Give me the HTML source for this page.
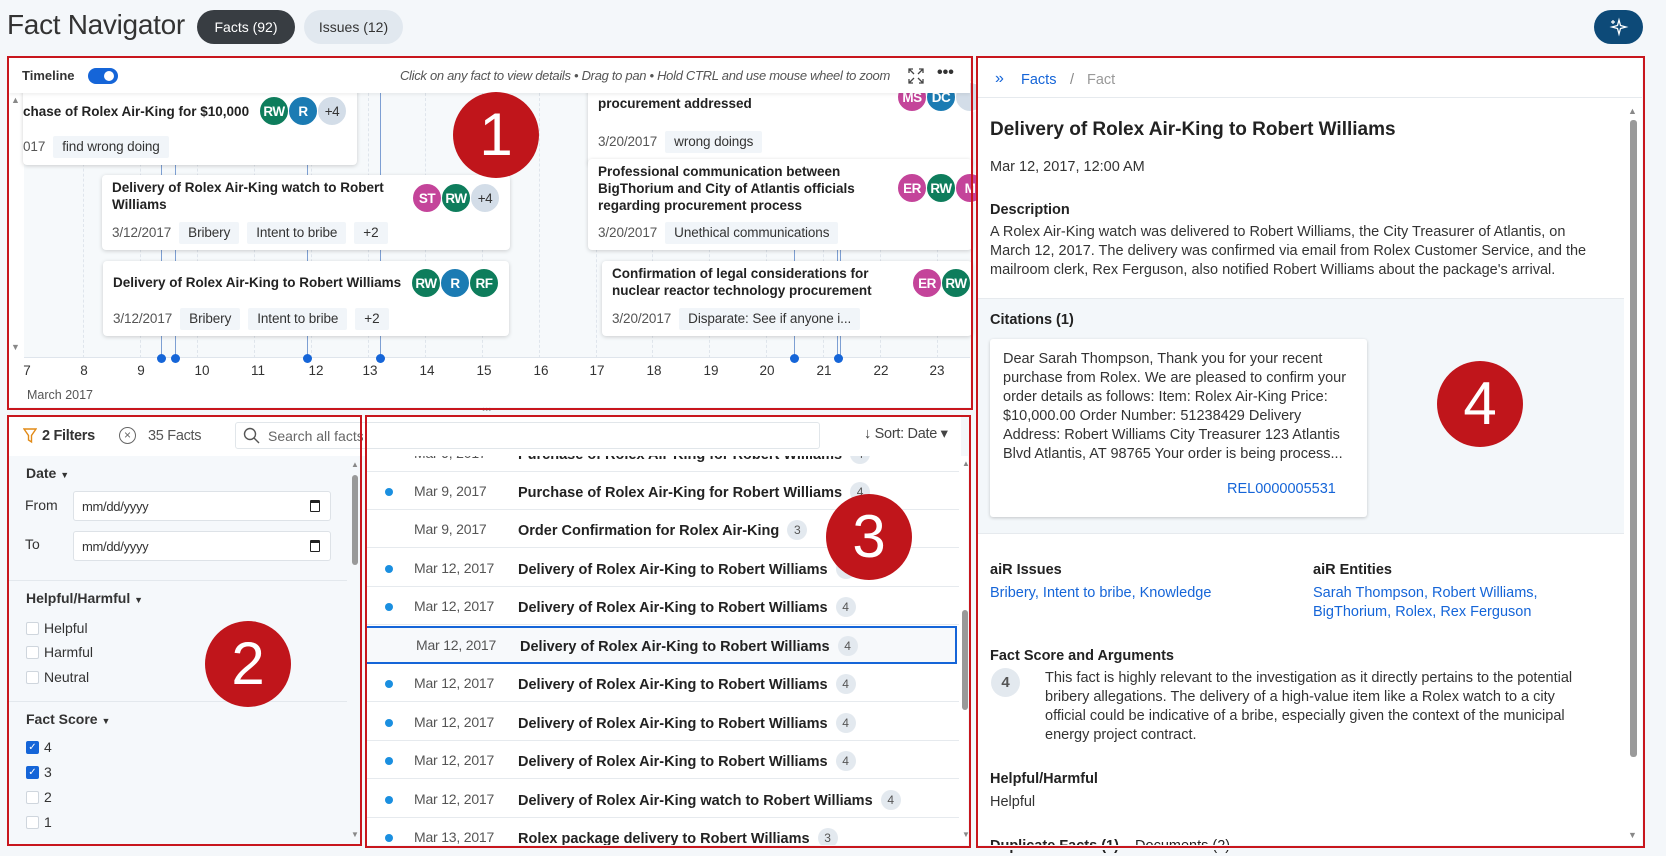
<!DOCTYPE html>
<html><head><meta charset="utf-8"><style>
*{box-sizing:border-box;margin:0;padding:0}
body{width:1666px;height:852px;background:#f4f7fa;font-family:"Liberation Sans",Arial,sans-serif;color:#222;position:relative;overflow:hidden}
.a{position:absolute}
.n{letter-spacing:-0.45px}
.red{position:absolute;border:2px solid #c8161d}
.num{position:absolute;width:86px;height:86px;border-radius:50%;background:#c0151b;color:#fff;font-size:60px;text-align:center;line-height:86px;font-family:"Liberation Sans",sans-serif}
.card{position:absolute;background:#fff;border-radius:4px;box-shadow:0 1px 4px rgba(0,0,0,.18)}
.ct{position:absolute;font-weight:bold;font-size:13.5px;line-height:17px;letter-spacing:0;color:#222}
.row{position:absolute;height:22px;line-height:22px;font-size:13.5px;letter-spacing:-0.1px;color:#444;white-space:nowrap}
.tag{display:inline-block;background:#f1f5f9;padding:0 9px;margin-right:8px;color:#333;border-radius:2px}
.dt{display:inline-block;margin-right:8px;color:#555}
.av{position:absolute;width:30px;height:30px;border-radius:50%;color:#fff;font-size:13.5px;font-weight:bold;text-align:center;line-height:30px;border:1.5px solid #fff;letter-spacing:-0.5px}
.g{background:#0e7d5c}.b{background:#1b7bb3}.p{background:#c4449a}.gr{background:#d3dde8;color:#333;font-weight:normal}
.vl{position:absolute;width:1px;background:#7d9fd3;top:93px;height:265px}
.dl{position:absolute;width:0;border-left:1px dashed #dfe5ec;top:93px;height:265px}
.dot{position:absolute;width:9px;height:9px;border-radius:50%;background:#1565d8;top:354px}
.tk{position:absolute;top:363px;font-size:13.5px;color:#333;width:20px;margin-left:-10px;text-align:center}
.lr{position:absolute;left:367px;width:592px;height:38px;border-bottom:1px solid #e6eaee;font-size:14px}
.lr .d{position:absolute;left:18px;top:16px;width:8px;height:8px;border-radius:50%;background:#1a8fe0}
.lr .dd{position:absolute;left:47px;top:11px;color:#555;letter-spacing:-0.2px}
.lr .t{position:absolute;left:151px;top:10px;font-weight:bold;font-size:14.5px;letter-spacing:0;white-space:nowrap}
.bd{display:inline-block;width:20px;height:20px;border-radius:50%;background:#e3e9ef;color:#555;font-weight:normal;font-size:12px;text-align:center;line-height:20px;margin-left:8px;vertical-align:1px}
.cb{position:absolute;left:26px;width:13px;height:13px;border:1px solid #cfd6dd;border-radius:2px;background:#fff}
.cbk{background:#1565d8;border-color:#1565d8;color:#fff;font-size:10px;line-height:11px;text-align:center}
.fl{position:absolute;left:44px;font-size:14px;color:#333}
.inp{position:absolute;left:73px;width:258px;height:30px;background:#fff;border:1px solid #dde2e7;border-radius:3px;font-size:13px;color:#333;padding:7px 8px;letter-spacing:-0.3px}
.inp i{position:absolute;right:10px;top:8px;width:10px;height:12px;border:1.5px solid #222;border-top-width:3px;border-radius:1px}
.r4{position:absolute;left:990px;font-size:14.5px;color:#333;line-height:19px}
.h4{font-weight:bold;color:#222}
.lk{color:#1565d8}
</style></head><body>

<!-- header -->
<div class="a" style="left:7px;top:9px;font-size:28px;color:#333;letter-spacing:-0.3px">Fact Navigator</div>
<div class="a" style="left:197px;top:10px;width:98px;height:34px;border-radius:17px;background:#383d42;color:#fff;font-size:14px;text-align:center;line-height:34px">Facts (92)</div>
<div class="a" style="left:304px;top:10px;width:99px;height:34px;border-radius:17px;background:#e1e8ef;color:#333;font-size:14px;text-align:center;line-height:34px">Issues (12)</div>
<div class="a" style="left:1594px;top:10px;width:49px;height:34px;border-radius:17px;background:#0d4a78">
<svg width="49" height="34" viewBox="0 0 49 34"><path d="M25 10 L26.5 15.5 L32 17 L26.5 18.5 L25 24 L23.5 18.5 L18 17 L23.5 15.5Z" fill="none" stroke="#fff" stroke-width="1.3"/><path d="M19 10v4M17 12h4" stroke="#fff" stroke-width="1.2"/></svg></div>

<!-- Panel 1 timeline -->
<div class="a" style="left:9px;top:58px;width:961px;height:349px;background:#fff"></div>
<div class="a" style="left:24px;top:93px;width:946px;height:265px;background:#f6f9fb;overflow:hidden">
</div>
<div class="dl" style="left:83px"></div><div class="dl" style="left:140px"></div><div class="dl" style="left:197px"></div><div class="dl" style="left:254px"></div><div class="dl" style="left:311px"></div><div class="dl" style="left:368px"></div><div class="dl" style="left:425px"></div><div class="dl" style="left:482px"></div><div class="dl" style="left:539px"></div><div class="dl" style="left:596px"></div><div class="dl" style="left:652px"></div><div class="dl" style="left:709px"></div><div class="dl" style="left:766px"></div><div class="dl" style="left:823px"></div><div class="dl" style="left:880px"></div><div class="dl" style="left:937px"></div>
<div class="vl" style="left:161px"></div><div class="vl" style="left:175px"></div><div class="vl" style="left:307px"></div><div class="vl" style="left:380px"></div><div class="vl" style="left:794px"></div><div class="vl" style="left:837px"></div><div class="vl" style="left:840px"></div>
<div class="a" style="left:24px;top:357px;width:946px;height:1px;background:#dfe5ec"></div>
<div class="dot" style="left:157px"></div><div class="dot" style="left:171px"></div><div class="dot" style="left:303px"></div><div class="dot" style="left:376px"></div><div class="dot" style="left:790px"></div><div class="dot" style="left:834px"></div>
<div class="tk" style="left:27px">7</div><div class="tk" style="left:84px">8</div><div class="tk" style="left:141px">9</div><div class="tk" style="left:202px">10</div><div class="tk" style="left:258px">11</div><div class="tk" style="left:316px">12</div><div class="tk" style="left:370px">13</div><div class="tk" style="left:427px">14</div><div class="tk" style="left:484px">15</div><div class="tk" style="left:541px">16</div><div class="tk" style="left:597px">17</div><div class="tk" style="left:654px">18</div><div class="tk" style="left:711px">19</div><div class="tk" style="left:767px">20</div><div class="tk" style="left:824px">21</div><div class="tk" style="left:881px">22</div><div class="tk" style="left:937px">23</div>
<div class="a" style="left:27px;top:388px;font-size:12.5px;color:#555">March 2017</div>
<div class="a" style="left:11px;top:95px;font-size:9px;color:#888">▲</div>
<div class="a" style="left:11px;top:342px;font-size:9px;color:#888">▼</div>

<!-- cards -->
<div class="card" style="left:23px;top:80px;width:334px;height:85px">
 <div class="ct" style="left:0;top:23px">chase of Rolex Air-King for $10,000</div>
 <div class="av g" style="left:236px;top:16px">RW</div><div class="av b" style="left:265px;top:16px">R</div><div class="av gr" style="left:294px;top:16px">+4</div>
 <div class="row" style="left:0;top:56px"><span class="dt">017</span><span class="tag">find wrong doing</span></div>
</div>
<div class="card" style="left:588px;top:80px;width:384px;height:85px">
 <div class="ct" style="left:10px;top:15px">procurement addressed</div>
 <div class="av p" style="left:309px;top:2px">MS</div><div class="av b" style="left:338px;top:2px">DC</div><div class="av gr" style="left:367px;top:2px"></div>
 <div class="row" style="left:10px;top:51px"><span class="dt">3/20/2017</span><span class="tag">wrong doings</span></div>
</div>
<div class="card" style="left:102px;top:175px;width:408px;height:75px">
 <div class="ct" style="left:10px;top:4px">Delivery of Rolex Air-King watch to Robert<br>Williams</div>
 <div class="av p" style="left:310px;top:8px">ST</div><div class="av g" style="left:339px;top:8px">RW</div><div class="av gr" style="left:368px;top:8px">+4</div>
 <div class="row" style="left:10px;top:47px"><span class="dt">3/12/2017</span><span class="tag">Bribery</span><span class="tag">Intent to bribe</span><span class="tag">+2</span></div>
</div>
<div class="card" style="left:588px;top:159px;width:384px;height:91px">
 <div class="ct" style="left:10px;top:4px">Professional communication between<br>BigThorium and City of Atlantis officials<br>regarding procurement process</div>
 <div class="av p" style="left:309px;top:14px">ER</div><div class="av g" style="left:338px;top:14px">RW</div><div class="av p" style="left:367px;top:14px">M</div>
 <div class="row" style="left:10px;top:63px"><span class="dt">3/20/2017</span><span class="tag">Unethical communications</span></div>
</div>
<div class="card" style="left:103px;top:261px;width:406px;height:75px">
 <div class="ct" style="left:10px;top:13px">Delivery of Rolex Air-King to Robert Williams</div>
 <div class="av g" style="left:308px;top:7px">RW</div><div class="av b" style="left:337px;top:7px">R</div><div class="av g" style="left:366px;top:7px">RF</div>
 <div class="row" style="left:10px;top:47px"><span class="dt">3/12/2017</span><span class="tag">Bribery</span><span class="tag">Intent to bribe</span><span class="tag">+2</span></div>
</div>
<div class="card" style="left:602px;top:261px;width:370px;height:75px">
 <div class="ct" style="left:10px;top:4px">Confirmation of legal considerations for<br>nuclear reactor technology procurement</div>
 <div class="av p" style="left:310px;top:7px">ER</div><div class="av g" style="left:339px;top:7px">RW</div>
 <div class="row" style="left:10px;top:47px"><span class="dt">3/20/2017</span><span class="tag">Disparate: See if anyone i...</span></div>
</div>

<!-- timeline header -->
<div class="a" style="left:9px;top:58px;width:961px;height:35px;background:#fff;box-shadow:0 2px 3px rgba(0,0,0,.06)"></div>
<div class="a" style="left:22px;top:68px;font-size:13px;font-weight:bold;color:#333">Timeline</div>
<div class="a" style="left:88px;top:68px;width:30px;height:16px;border-radius:8px;background:#1565d8"><div class="a" style="left:16px;top:3px;width:10px;height:10px;border-radius:50%;background:#fff"></div></div>
<div class="a n" style="left:380px;top:68px;width:510px;text-align:right;font-size:13px;font-style:italic;color:#555;letter-spacing:-0.3px">Click on any fact to view details • Drag to pan • Hold CTRL and use mouse wheel to zoom</div>
<svg class="a" style="left:907px;top:67px" width="18" height="18" viewBox="0 0 18 18" fill="none" stroke="#444" stroke-width="1.3"><path d="M2 6V2h4M2 2l5 5M16 6V2h-4M16 2l-5 5M2 12v4h4M2 16l5-5M16 12v4h-4M16 16l-5-5"/></svg>
<div class="a" style="left:937px;top:64px;font-size:16px;font-weight:bold;color:#333">•••</div>
<div class="a" style="left:482px;top:404px;font-size:9px;color:#333;font-weight:bold">•••</div>

<!-- Panel 2 filters -->
<div class="a" style="left:9px;top:417px;width:952px;height:39px;background:#fff"></div>
<svg class="a" style="left:23px;top:428px" width="14" height="16" viewBox="0 0 14 16"><path d="M1 1h12L8.5 7.5V14L5.5 12V7.5Z" fill="none" stroke="#e28a17" stroke-width="1.4"/></svg>
<div class="a" style="left:42px;top:428px;font-size:14.5px;font-weight:bold;color:#333;letter-spacing:-0.3px">2 Filters</div>
<div class="a" style="left:119px;top:427px;width:17px;height:17px;border:1.3px solid #666;border-radius:50%;font-size:12px;text-align:center;line-height:14px;color:#666">×</div>
<div class="a" style="left:148px;top:428px;font-size:14.5px;color:#555;letter-spacing:-0.3px">35 Facts</div>
<div class="a" style="left:235px;top:422px;width:585px;height:27px;border:1px solid #e1e6ea;border-radius:3px;background:#fff"></div>
<svg class="a" style="left:243px;top:427px" width="17" height="17" viewBox="0 0 17 17" fill="none" stroke="#555" stroke-width="1.4"><circle cx="7" cy="7" r="5.5"/><path d="M11 11l5 5"/></svg>
<div class="a" style="left:268px;top:428px;font-size:14px;color:#666;width:95px;overflow:hidden;white-space:nowrap">Search all facts</div>
<div class="a" style="left:864px;top:426px;font-size:14.5px;color:#444;letter-spacing:-0.3px">↓ Sort: Date ▾</div>

<div class="a" style="left:9px;top:456px;width:350px;height:389px;background:#f5f8fb"></div>
<div class="a" style="left:26px;top:465px;font-size:14px;font-weight:bold;color:#333">Date <span style="font-size:9px">▼</span></div>
<div class="fl" style="left:25px;top:497px">From</div>
<div class="inp" style="top:491px">mm/dd/yyyy<i></i></div>
<div class="fl" style="left:25px;top:536px">To</div>
<div class="inp" style="top:531px">mm/dd/yyyy<i></i></div>
<div class="a" style="left:9px;top:580px;width:338px;height:1px;background:#e3e8ed"></div>
<div class="a" style="left:26px;top:590px;font-size:14px;font-weight:bold;color:#333">Helpful/Harmful <span style="font-size:9px">▼</span></div>
<div class="cb" style="top:622px"></div><div class="fl" style="top:620px">Helpful</div>
<div class="cb" style="top:646px"></div><div class="fl" style="top:644px">Harmful</div>
<div class="cb" style="top:671px"></div><div class="fl" style="top:669px">Neutral</div>
<div class="a" style="left:9px;top:701px;width:338px;height:1px;background:#e3e8ed"></div>
<div class="a" style="left:26px;top:711px;font-size:14px;font-weight:bold;color:#333">Fact Score <span style="font-size:9px">▼</span></div>
<div class="cb cbk" style="top:741px">✓</div><div class="fl" style="top:739px">4</div>
<div class="cb cbk" style="top:766px">✓</div><div class="fl" style="top:764px">3</div>
<div class="cb" style="top:791px"></div><div class="fl" style="top:789px">2</div>
<div class="cb" style="top:816px"></div><div class="fl" style="top:814px">1</div>
<div class="a" style="left:351px;top:460px;font-size:8px;color:#888">▲</div>
<div class="a" style="left:351px;top:830px;font-size:8px;color:#888">▼</div>
<div class="a" style="left:352px;top:475px;width:6px;height:90px;border-radius:3px;background:#999"></div>

<!-- Panel 3 list -->
<div class="a" style="left:367px;top:456px;width:601px;height:389px;background:#fff;overflow:hidden">
</div>
<div class="a" style="left:367px;top:456px;width:601px;height:389px;overflow:hidden">
<div class="lr" style="left:0;top:-22px"><div class="dd">Mar 9, 2017</div><div class="t">Purchase of Rolex Air-King for Robert Williams<span class="bd">4</span></div></div>
<div class="lr" style="left:0;top:16px"><div class="d"></div><div class="dd">Mar 9, 2017</div><div class="t">Purchase of Rolex Air-King for Robert Williams<span class="bd">4</span></div></div>
<div class="lr" style="left:0;top:54px"><div class="dd">Mar 9, 2017</div><div class="t">Order Confirmation for Rolex Air-King<span class="bd">3</span></div></div>
<div class="lr" style="left:0;top:93px"><div class="d"></div><div class="dd">Mar 12, 2017</div><div class="t">Delivery of Rolex Air-King to Robert Williams<span class="bd">4</span></div></div>
<div class="lr" style="left:0;top:131px"><div class="d"></div><div class="dd">Mar 12, 2017</div><div class="t">Delivery of Rolex Air-King to Robert Williams<span class="bd">4</span></div></div>
<div class="lr" style="left:-2px;top:170px;border:2px solid #1565d8;background:#f7f9fb"><div class="dd" style="top:9px;left:49px">Mar 12, 2017</div><div class="t" style="top:8px;left:153px">Delivery of Rolex Air-King to Robert Williams<span class="bd">4</span></div></div>
<div class="lr" style="left:0;top:208px"><div class="d"></div><div class="dd">Mar 12, 2017</div><div class="t">Delivery of Rolex Air-King to Robert Williams<span class="bd">4</span></div></div>
<div class="lr" style="left:0;top:247px"><div class="d"></div><div class="dd">Mar 12, 2017</div><div class="t">Delivery of Rolex Air-King to Robert Williams<span class="bd">4</span></div></div>
<div class="lr" style="left:0;top:285px"><div class="d"></div><div class="dd">Mar 12, 2017</div><div class="t">Delivery of Rolex Air-King to Robert Williams<span class="bd">4</span></div></div>
<div class="lr" style="left:0;top:324px"><div class="d"></div><div class="dd">Mar 12, 2017</div><div class="t">Delivery of Rolex Air-King watch to Robert Williams<span class="bd">4</span></div></div>
<div class="lr" style="left:0;top:362px"><div class="d"></div><div class="dd">Mar 13, 2017</div><div class="t">Rolex package delivery to Robert Williams<span class="bd">3</span></div></div>
</div>
<div class="a" style="left:962px;top:459px;font-size:8px;color:#888">▲</div>
<div class="a" style="left:962px;top:830px;font-size:8px;color:#888">▼</div>
<div class="a" style="left:962px;top:610px;width:6px;height:100px;border-radius:3px;background:#999"></div>

<!-- Panel 4 detail -->
<div class="a" style="left:978px;top:58px;width:664px;height:787px;background:#fff"></div>
<div class="a" style="left:995px;top:70px;font-size:16px;color:#1565d8">»</div>
<div class="a" style="left:1021px;top:72px;font-size:14.5px;color:#1565d8">Facts</div>
<div class="a" style="left:1070px;top:72px;font-size:14.5px;color:#888">/</div>
<div class="a" style="left:1087px;top:72px;font-size:14.5px;color:#999">Fact</div>
<div class="a" style="left:978px;top:97px;width:664px;height:1px;background:#e6eaee"></div>
<div class="a" style="left:978px;top:298px;width:646px;height:236px;background:#f3f7fa;border-top:1px solid #e6eaee;border-bottom:1px solid #e6eaee"></div>
<div class="r4 h4" style="top:119px;font-size:19px;line-height:22px">Delivery of Rolex Air-King to Robert Williams</div>
<div class="r4" style="top:158px">Mar 12, 2017, 12:00 AM</div>
<div class="r4 h4" style="top:201px">Description</div>
<div class="r4" style="top:223px;width:608px">A Rolex Air-King watch was delivered to Robert Williams, the City Treasurer of Atlantis, on March 12, 2017. The delivery was confirmed via email from Rolex Customer Service, and the mailroom clerk, Rex Ferguson, also notified Robert Williams about the package's arrival.</div>
<div class="r4 h4" style="top:311px">Citations (1)</div>
<div class="a" style="left:990px;top:339px;width:377px;height:178px;background:#fff;border-radius:3px;box-shadow:0 1px 3px rgba(0,0,0,.2)"></div>
<div class="r4" style="left:1003px;top:350px;width:355px">Dear Sarah Thompson, Thank you for your recent purchase from Rolex. We are pleased to confirm your order details as follows: Item: Rolex Air-King Price: $10,000.00 Order Number: 51238429 Delivery Address: Robert Williams City Treasurer 123 Atlantis Blvd Atlantis, AT 98765 Your order is being process...</div>
<div class="r4 lk" style="left:1227px;top:480px">REL0000005531</div>
<div class="r4 h4" style="top:561px">aiR Issues</div>
<div class="r4 lk" style="top:584px">Bribery, Intent to bribe, Knowledge</div>
<div class="r4 h4" style="left:1313px;top:561px">aiR Entities</div>
<div class="r4 lk" style="left:1313px;top:584px;width:260px">Sarah Thompson, Robert Williams, BigThorium, Rolex, Rex Ferguson</div>
<div class="r4 h4" style="top:647px">Fact Score and Arguments</div>
<div class="a" style="left:991px;top:668px;width:29px;height:29px;border-radius:50%;background:#e3e9ef;color:#555;font-weight:bold;text-align:center;line-height:29px;font-size:15px">4</div>
<div class="r4" style="left:1045px;top:669px;width:545px">This fact is highly relevant to the investigation as it directly pertains to the potential bribery allegations. The delivery of a high-value item like a Rolex watch to a city official could be indicative of a bribe, especially given the context of the municipal energy project contract.</div>
<div class="r4 h4" style="top:770px">Helpful/Harmful</div>
<div class="r4" style="top:793px">Helpful</div>
<div class="r4 h4" style="top:837px">Duplicate Facts (1) &nbsp;&nbsp; <span style="font-weight:normal">Documents (2)</span></div>
<div class="a" style="left:978px;top:845px;width:664px;height:5px;background:#f4f7fa"></div>
<div class="a" style="left:1628px;top:106px;font-size:9px;color:#888">▲</div>
<div class="a" style="left:1628px;top:830px;font-size:9px;color:#888">▼</div>
<div class="a" style="left:1630px;top:120px;width:7px;height:637px;border-radius:3px;background:#9a9a9a"></div>

<!-- annotations -->
<div class="red" style="left:7px;top:56px;width:966px;height:354px"></div>
<div class="red" style="left:976px;top:56px;width:669px;height:792px"></div>
<div class="red" style="left:7px;top:415px;width:355px;height:431px"></div>
<div class="red" style="left:365px;top:415px;width:606px;height:433px"></div>
<div class="num" style="left:453px;top:92px">1</div>
<div class="num" style="left:205px;top:621px">2</div>
<div class="num" style="left:826px;top:494px">3</div>
<div class="num" style="left:1437px;top:361px">4</div>
</body></html>
